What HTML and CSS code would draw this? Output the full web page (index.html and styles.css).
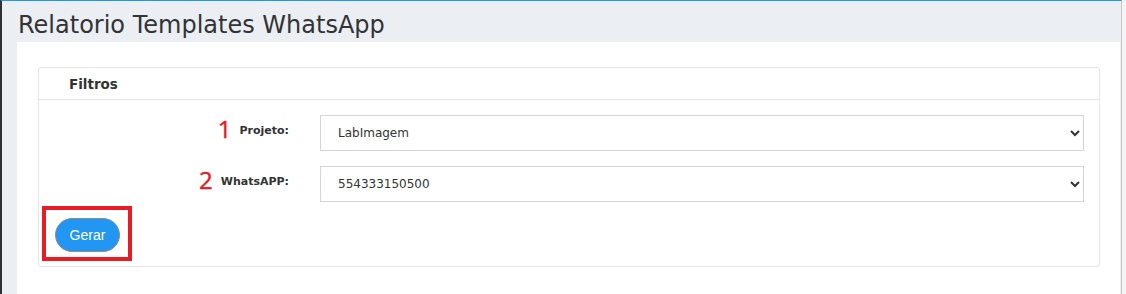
FILE: index.html
```html
<!DOCTYPE html>
<html lang="pt-BR">

<head>
  <meta charset="UTF-8">
  <meta name="viewport" content="width=device-width, initial-scale=1.0">
  <title>Relatorio Templates WhatsApp</title>
  <link rel="stylesheet" href="styles.css">
</head>

<body>
  <div class="page">
    <div class="pageHeader">
      <h1 class="pageTitle">Relatorio Templates WhatsApp</h1>
    </div>
    <div class="content">
      <div class="card">
        <div class="cardHeader">Filtros</div>
        <div class="cardBody">
          <div class="formRow">
            <div class="labelCell">
              <span class="stepNum">1</span>
              <label for="projeto">Projeto:</label>
            </div>
            <select id="projeto" class="formSelect">
              <option>LabImagem</option>
            </select>
          </div>
          <div class="formRow">
            <div class="labelCell">
              <span class="stepNum">2</span>
              <label for="whatsapp">WhatsAPP:</label>
            </div>
            <select id="whatsapp" class="formSelect">
              <option>554333150500</option>
            </select>
          </div>
          <div class="highlight">
            <button class="btn_gerar" type="button">Gerar</button>
          </div>
        </div>
      </div>
    </div>
  </div>
</body>

</html>
```

FILE: styles.css
```css
* {
  margin: 0;
  padding: 0;
  box-sizing: border-box;
}

html,
body {
  height: 100%;
}

body {
  background-color: #f4f4f4;
  font-family: "DejaVu Sans", Verdana, sans-serif;
  color: #333;
}

.page {
  width: 1122px;
  height: 100%;
  border-left: 2px solid #2c3137;
  border-top: 1px solid #2196f3;
  border-right: 1px solid #c4c4c4;
  background-color: #ebeef3;
  display: flex;
  flex-direction: column;
}

.pageHeader {
  height: 41px;
  padding: 10px 0 0 16px;
}

.pageTitle {
  font-size: 24px;
  line-height: 28px;
  font-weight: normal;
  color: #333;
}

.content {
  flex: 1;
  margin: 0 1px 0 15px;
  padding: 25px 20px 0 21px;
  background-color: #ffffff;
}

.card {
  border: 1px solid #e5e5e5;
  border-radius: 3px;
  padding-bottom: 5px;
}

.cardHeader {
  height: 32px;
  padding: 1px 0 0 30px;
  line-height: 30px;
  font-size: 13.5px;
  font-weight: 700;
  border-bottom: 1px solid #e5e5e5;
}

.cardBody {
  padding: 15px 15px 0 2px;
}

.formRow {
  display: grid;
  grid-template-columns: 248px 1fr;
  column-gap: 31px;
  margin-bottom: 15px;
}

.labelCell {
  display: flex;
  justify-content: flex-end;
  align-items: flex-start;
  gap: 8px;
}

.stepNum {
  font-family: "Open Sans", sans-serif;
  font-size: 24px;
  line-height: 24px;
  margin-top: 2px;
  color: #e31b23;
  -webkit-text-stroke: 0.4px #e31b23;
}

label {
  font-size: 11px;
  line-height: 13px;
  font-weight: 700;
  padding-top: 9px;
}

.formSelect {
  width: 100%;
  height: 36px;
  border: 1px solid #d4d4de;
  border-radius: 0;
  padding-left: 13px;
  font-family: "DejaVu Sans", Verdana, sans-serif;
  font-size: 12px;
  color: #333;
  background-color: #fff;
}

.formRow + .formRow {
  margin-bottom: 0;
}

.highlight {
  width: 90px;
  height: 55px;
  margin-top: 4px;
  margin-left: 1px;
  border: 4px solid #e81c24;
  padding: 8px 0 0 9px;
}

.btn_gerar {
  width: 65px;
  height: 34px;
  border: 1px solid #8d8d8d;
  border-radius: 17px;
  background-color: #2196f3;
  color: #ffffff;
  font-family: "Liberation Sans", Arial, sans-serif;
  font-size: 14px;
  cursor: pointer;
}
```
